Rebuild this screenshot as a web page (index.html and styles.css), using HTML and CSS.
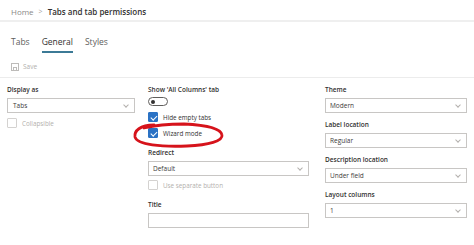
FILE: index.html
```html
<!DOCTYPE html>
<html lang="en">
<head>
    <meta charset="UTF-8">
    <title>Tabs and tab permissions</title>
    <link rel="stylesheet" href="styles.css">
</head>
<body>
    <div class="breadcrumb">
        <span class="crumb">Home</span>
        <span class="sep">&gt;</span>
        <span class="current">Tabs and tab permissions</span>
    </div>

    <div class="tabs">
        <span class="tab">Tabs</span>
        <span class="tab active">General</span>
        <span class="tab">Styles</span>
    </div>

    <div class="toolbar">
        <svg class="save-icon" width="8" height="8" viewBox="0 0 8 8">
            <rect x="0.5" y="0.5" width="7" height="7" fill="none" stroke="#bdbbb9"/>
            <rect x="2.5" y="4.5" width="3" height="3" fill="none" stroke="#bdbbb9"/>
        </svg>
        <span>Save</span>
    </div>

    <div class="form">
        <div class="col col-1">
            <label class="field-label">Display as</label>
            <div class="select">Tabs<span class="chev"></span></div>
            <div class="check disabled"><span class="box"></span>Collapsible</div>
        </div>

        <div class="col col-2">
            <label class="field-label">Show 'All Columns' tab</label>
            <div class="toggle"><span class="knob"></span></div>
            <div class="check first"><span class="box on"></span>Hide empty tabs</div>
            <div class="check wizard"><span class="box on"></span>Wizard mode
                <svg class="scribble" width="94" height="28" viewBox="0 0 94 28">
                    <path d="M22 4 C 8 4, 2 10, 3 16 C 5 24, 30 26, 55 25 C 77 24, 91 20, 90 14 C 89 7, 72 4, 52 3 C 38 3, 24 4, 12 7"
                          fill="none" stroke="#d6131b" stroke-width="2.8" stroke-linecap="round"/>
                </svg>
            </div>
            <label class="field-label redirect">Redirect</label>
            <div class="select">Default<span class="chev"></span></div>
            <div class="check disabled sep-btn"><span class="box"></span>Use separate button</div>
            <label class="field-label title">Title</label>
            <div class="select input"></div>
        </div>

        <div class="col col-3">
            <label class="field-label">Theme</label>
            <div class="select">Modern<span class="chev"></span></div>
            <label class="field-label">Label location</label>
            <div class="select">Regular<span class="chev"></span></div>
            <label class="field-label">Description location</label>
            <div class="select">Under field<span class="chev"></span></div>
            <label class="field-label">Layout columns</label>
            <div class="select">1<span class="chev"></span></div>
        </div>
    </div>
</body>
</html>
```

FILE: styles.css
```css
body {
    margin: 0;
    font-family: "Open Sans", "Noto Sans", sans-serif;
    color: #323130;
    background-color: white;
    width: 474px;
    height: 245px;
    overflow: hidden;
}
.breadcrumb {
    height: 22px;
    padding-left: 11px;
    display: flex;
    align-items: center;
    gap: 5px;
    font-size: 8px;
    border-bottom: 2px solid #efefef;
    box-sizing: border-box;
    padding-top: 3px;
}
.crumb {
    color: #8a8886;
}
.sep {
    color: #a19f9d;
    font-size: 7px;
}
.current {
    font-weight: 600;
}
.tabs {
    display: flex;
    gap: 12px;
    padding: 14px 0 0 11px;
    font-size: 8.5px;
}
.tab {
    color: #605e5c;
    padding-bottom: 4px;
}
.tab.active {
    color: #323130;
    border-bottom: 2px solid #3c7a96;
}
.toolbar {
    display: flex;
    align-items: center;
    gap: 4px;
    padding: 9px 0 6px 11px;
    font-size: 6.5px;
    color: #b3b0ad;
    border-bottom: 1px solid #ececec;
}
.form {
    display: flex;
    padding: 0 0 0 7px;
}
.col {
    display: flex;
    flex-direction: column;
    align-items: flex-start;
}
.col-1 {
    width: 128px;
    margin-right: 13px;
}
.col-2 {
    width: 161px;
    margin-right: 16px;
}
.col-3 {
    width: 142px;
}
.field-label {
    font-size: 6.5px;
    font-weight: 600;
    line-height: 10px;
    margin-top: 7px;
    margin-bottom: 3px;
}
.field-label.redirect {
    margin-top: 9px;
}
.field-label.title {
    margin-top: 9px;
}
.select {
    box-sizing: border-box;
    width: 100%;
    height: 15px;
    border: 1px solid #c8c6c4;
    font-size: 6.5px;
    color: #3b3a39;
    padding-left: 4px;
    display: flex;
    align-items: center;
    position: relative;
}
.col-1 .select {
    padding-left: 5px;
}
.chev {
    position: absolute;
    right: 6px;
    top: 4px;
    width: 3px;
    height: 3px;
    border-right: 1px solid #b3b0ad;
    border-bottom: 1px solid #b3b0ad;
    transform: rotate(45deg);
}
.check {
    display: flex;
    align-items: center;
    gap: 5px;
    font-size: 6.3px;
    margin-top: 4px;
    height: 12px;
    position: relative;
}
.check.first {
    margin-top: 5px;
}
.check.sep-btn {
    margin-top: 3px;
}
.check.disabled {
    color: #b3b0ad;
}
.box {
    box-sizing: border-box;
    width: 10px;
    height: 10px;
    border: 1px solid #d4d2d0;
    border-radius: 1px;
}
.box.on {
    background-color: #2b72c4;
    border-color: #2b72c4;
    position: relative;
}
.box.on::after {
    content: "";
    position: absolute;
    left: 2.5px;
    top: 0.5px;
    width: 2.5px;
    height: 5px;
    border-right: 1.2px solid white;
    border-bottom: 1.2px solid white;
    transform: rotate(45deg);
}
.toggle {
    box-sizing: border-box;
    width: 20px;
    height: 9px;
    border: 1px solid #605e5c;
    border-radius: 5px;
    margin-top: -1px;
    position: relative;
}
.knob {
    position: absolute;
    left: 2px;
    top: 1.5px;
    width: 4px;
    height: 4px;
    border-radius: 50%;
    background-color: #323130;
}
.scribble {
    position: absolute;
    left: -16px;
    top: -6px;
}
```
